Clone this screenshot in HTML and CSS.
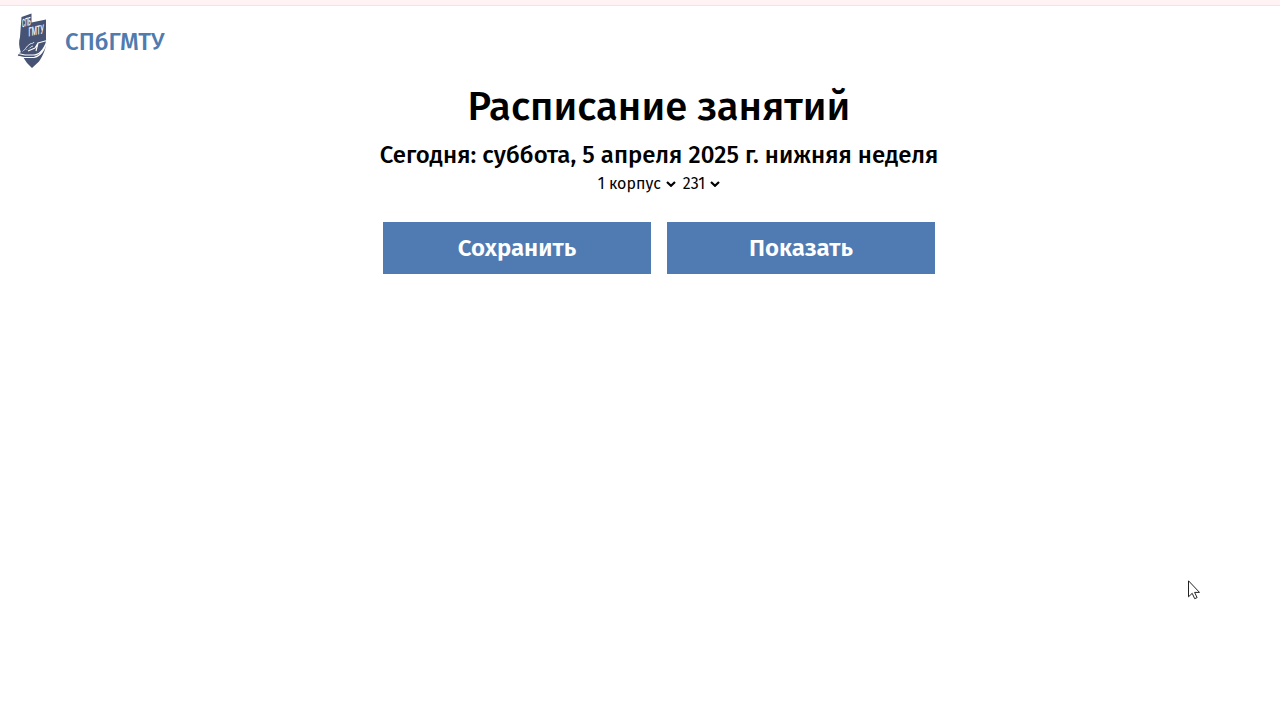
FILE: index.html
```html
<!DOCTYPE html>
<html lang="ru">
<head>
<meta charset="utf-8">
<title>Расписание занятий</title>
<link rel="stylesheet" href="styles.css">
</head>
<body>
<div class="top-strip"></div>
<header class="header">
  <svg class="logo" viewBox="0 0 32 56" width="32" height="56">
    <path fill="#465374" d="M4.500 4 14.500 .5v9l14.500-3v19c1 9-3 17-7 23L15 55l-5-5C5 43 0 34 3 24z"/>
    <g class="mark">
      <text transform="translate(5 14.500) skewY(-17)" font-size="11.500" textLength="8.800" lengthAdjust="spacingAndGlyphs">СПБ</text>
      <text transform="translate(11.500 23.500) skewY(-12)" font-size="12.500" textLength="15.500" lengthAdjust="spacingAndGlyphs">ГМТУ</text>
    </g>
    <path fill="none" stroke="#fff" stroke-width=".8" d="M5 39c3-1 4-6 8-8 2-1 3 0 4-2M9 37c4 0 3-3 7-4"/>
    <path fill="#465374" stroke="#fff" stroke-width="1.100" stroke-linejoin="round" d="M1 40.500 8 42h8c6 0 11-5 14-14.500l-9 2.500-3 5-7 3M21 30l-2 8M1 40.500 0 43l7 1.500h10C24 43 28 36 30 27.500"/>
  </svg>
  <span class="brand">СПбГМТУ</span>
</header>
<main class="main">
  <h1 class="title">Расписание занятий</h1>
  <h2 class="today">Сегодня: суббота, 5 апреля 2025 г. нижняя неделя</h2>
  <div class="filters">
    <span class="select">1 корпус<svg class="chevron" viewBox="0 0 10 6"><path d="m1 1 4 3.800L9 1"/></svg></span>
    <span class="select">231<svg class="chevron" viewBox="0 0 10 6"><path d="m1 1 4 3.800L9 1"/></svg></span>
  </div>
  <div class="actions">
    <button class="button">Сохранить</button>
    <button class="button">Показать</button>
  </div>
</main>
<svg class="cursor" viewBox="0 0 12 20" width="12" height="20"><path d="M.5.800v16l3.700-3.500 2.500 5.400 2.400-1.100-2.500-5.200h4.900z"/></svg>
</body>
</html>
```
FILE: styles.css
```css
* { box-sizing: border-box; }
body {
  margin: 0;
  height: 720px;
  overflow: hidden;
  background: #fff;
  color: #000;
  font-family: "Fira Sans", "Noto Sans", sans-serif;
}
.top-strip { height: 6px; background: #fff3f6; border-bottom: 1px solid #eee4e8; }
.header { display: flex; align-items: center; gap: 16px; height: 70px; padding: 0 0 0 17px; }
.logo { display: block; overflow: visible; }
.mark { fill: #fff; font-family: Roboto, sans-serif; font-weight: 500; }
.brand { padding-top: 1px; color: #4f7bae; font-size: 24px; font-weight: 500; line-height: 30px; }
.main { display: flex; flex-direction: column; align-items: center; padding-left: 38px; white-space: nowrap; }
.title { margin: 0; padding-top: 7px; height: 60px; font-size: 40px; font-weight: 500; line-height: 48px; }
.today { margin: 0; height: 34px; font-size: 24px; font-weight: 500; line-height: 38px; letter-spacing: 0.03px; }
.filters { display: flex; gap: 7px; height: 26px; margin-top: 1px; font-size: 16px; line-height: 26px; }
.select { display: flex; align-items: center; gap: 5px; }
.chevron { width: 10px; height: 6px; fill: none; stroke: #000; stroke-width: 2.2; }
.actions { display: flex; gap: 16px; margin-top: 25px; }
.button {
  width: 268px;
  height: 52px;
  border: 0;
  padding: 0;
  background: #507bb2;
  color: #fff;
  font: 600 24px/52px "Fira Sans", "Noto Sans", sans-serif;
}
.cursor { position: absolute; left: 1188px; top: 580px; fill: #fff; stroke: #222; stroke-width: 1; }
```
